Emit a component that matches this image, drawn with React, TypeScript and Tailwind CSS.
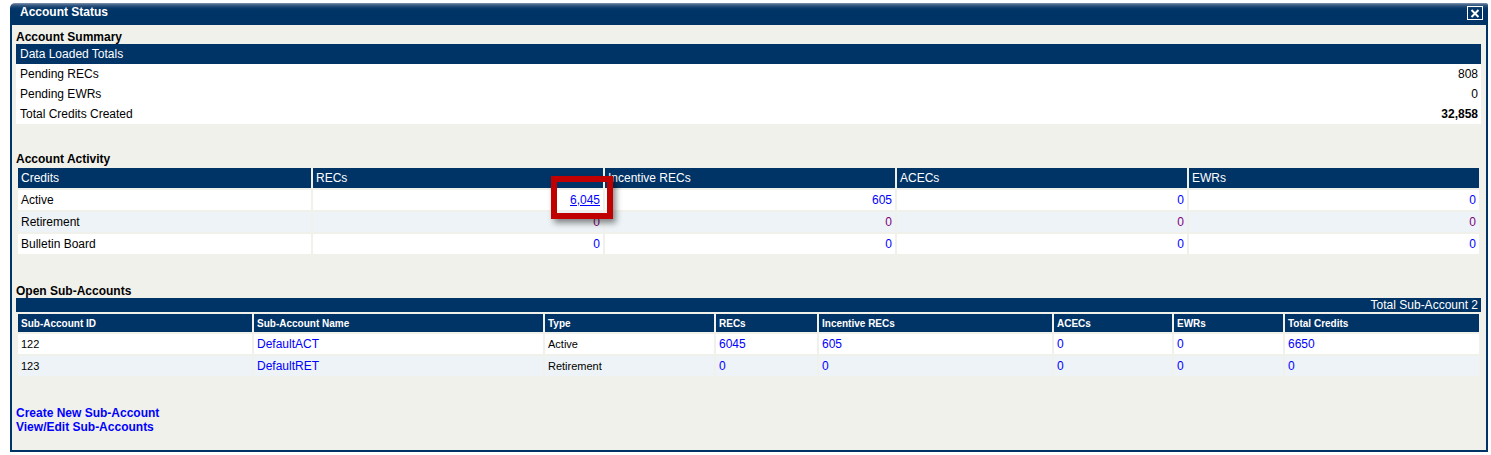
import React from "react";

const BLUE = "text-[#0000ff]";
const PURPLE = "text-[#800080]";

function CloseBox() {
  return (
    <div className="mt-[3px] flex h-[14px] w-[16px] items-center justify-center border border-white">
      <svg width="10" height="9" viewBox="0 0 10 9">
        <path d="M1.5 1 L8.5 8 M8.5 1 L1.5 8" stroke="white" strokeWidth="2" fill="none" />
      </svg>
    </div>
  );
}

const activityRows = [
  { label: "Active", bg: "bg-white", vals: ["6,045", "605", "0", "0"], color: BLUE, underline: true },
  { label: "Retirement", bg: "bg-[#edf3f6]", vals: ["0", "0", "0", "0"], color: PURPLE, underline: false },
  { label: "Bulletin Board", bg: "bg-white", vals: ["0", "0", "0", "0"], color: BLUE, underline: false },
];

const subRows = [
  { id: "122", name: "DefaultACT", type: "Active", vals: ["6045", "605", "0", "0", "6650"], bg: "bg-white" },
  { id: "123", name: "DefaultRET", type: "Retirement", vals: ["0", "0", "0", "0", "0"], bg: "bg-[#edf3f6]" },
];

export default function App() {
  return (
    <div className="relative min-h-[455px] bg-white font-['Liberation_Sans',Arial,sans-serif] text-[12px] text-black">
      <div className="pl-[10px] pt-[3px]">
        <div className="flex h-[449px] w-[1478px] flex-col">
          {/* Title bar */}
          <div className="flex h-[22px] items-start justify-between rounded-tl-[5px] rounded-tr-[2px] bg-[linear-gradient(to_bottom,#8196ae_0px,#3a5c84_2px,#0a3b6b_5px,#003366_8px)] pl-[10px] pr-[5px]">
            <div className="pt-[2px] text-[12px] font-bold leading-[15px] text-white">Account Status</div>
            <CloseBox />
          </div>

          {/* Body */}
          <div className="flex-1 border-x-2 border-b-2 border-[#003366] bg-[#f1f1ec] pl-[4px] pr-[5px] pt-[4px]">
            {/* Account Summary */}
            <div className="h-[15px] font-bold leading-[17px]">Account Summary</div>
            <div className="h-[20px] bg-[#003366] pl-[4px] leading-[20px] text-white">Data Loaded Totals</div>
            <div className="bg-white">
              <div className="flex h-[20px] items-center justify-between pl-[4px] pr-[3px]">
                <span>Pending RECs</span>
                <span>808</span>
              </div>
              <div className="flex h-[20px] items-center justify-between pl-[4px] pr-[3px]">
                <span>Pending EWRs</span>
                <span>0</span>
              </div>
              <div className="flex h-[20px] items-center justify-between pl-[4px] pr-[3px]">
                <span>Total Credits Created</span>
                <span className="font-bold">32,858</span>
              </div>
            </div>

            {/* Account Activity */}
            <div className="mt-[27px] h-[15px] font-bold leading-[16px]">Account Activity</div>
            <table className="w-[1465px] table-fixed border-separate border-spacing-[2px]">
              <colgroup>
                <col className="w-[293px]" />
                <col className="w-[290px]" />
                <col className="w-[290px]" />
                <col className="w-[290px]" />
                <col className="w-[290px]" />
              </colgroup>
              <thead>
                <tr>
                  {["Credits", "RECs", "Incentive RECs", "ACECs", "EWRs"].map((h) => (
                    <th key={h} className="h-[20px] bg-[#003366] p-0 pl-[3px] text-left align-middle text-[12px] font-normal leading-[20px] text-white">
                      {h}
                    </th>
                  ))}
                </tr>
              </thead>
              <tbody>
                {activityRows.map((r) => (
                  <tr key={r.label}>
                    <td className={`h-[20px] p-0 pl-[3px] align-middle leading-[20px] ${r.bg}`}>{r.label}</td>
                    {r.vals.map((v, i) => (
                      <td key={i} className={`h-[20px] p-0 pr-[3px] text-right align-middle leading-[20px] ${r.bg}`}>
                        <span className={`${r.color} ${r.underline && i === 0 ? "underline" : ""}`}>{v}</span>
                      </td>
                    ))}
                  </tr>
                ))}
              </tbody>
            </table>

            {/* Open Sub-Accounts */}
            <div className="mt-[27px] h-[15px] font-bold leading-[17px]">Open Sub-Accounts</div>
            <div className="h-[14px] bg-[#003366] pr-[3px] text-right leading-[14px] text-white">Total Sub-Account 2</div>
            <table className="w-[1465px] table-fixed border-separate border-spacing-[2px]">
              <colgroup>
                <col className="w-[234px]" />
                <col className="w-[289px]" />
                <col className="w-[169px]" />
                <col className="w-[101px]" />
                <col className="w-[233px]" />
                <col className="w-[118px]" />
                <col className="w-[109px]" />
                <col className="w-[194px]" />
              </colgroup>
              <thead>
                <tr>
                  {["Sub-Account ID", "Sub-Account Name", "Type", "RECs", "Incentive RECs", "ACECs", "EWRs", "Total Credits"].map((h) => (
                    <th key={h} className="h-[18px] bg-[#003366] p-0 pl-[3px] pt-[1px] text-left align-middle text-[10px] font-bold leading-[17px] text-white">
                      {h}
                    </th>
                  ))}
                </tr>
              </thead>
              <tbody>
                {subRows.map((r) => (
                  <tr key={r.id}>
                    <td className={`h-[20px] p-0 pl-[3px] align-middle text-[11px] leading-[20px] ${r.bg}`}>{r.id}</td>
                    <td className={`h-[20px] p-0 pl-[3px] align-middle leading-[20px] ${r.bg}`}>
                      <span className={BLUE}>{r.name}</span>
                    </td>
                    <td className={`h-[20px] p-0 pl-[3px] align-middle text-[11px] leading-[20px] ${r.bg}`}>{r.type}</td>
                    {r.vals.map((v, i) => (
                      <td key={i} className={`h-[20px] p-0 pl-[3px] align-middle leading-[20px] ${r.bg}`}>
                        <span className={BLUE}>{v}</span>
                      </td>
                    ))}
                  </tr>
                ))}
              </tbody>
            </table>

            {/* Links */}
            <div className="mt-[28px] flex flex-col font-bold leading-[14px] text-[#0000ff]">
              <span>Create New Sub-Account</span>
              <span>View/Edit Sub-Accounts</span>
            </div>
          </div>
        </div>
      </div>

      {/* Annotation highlight */}
      <div className="absolute left-[551px] top-[176px] h-[43px] w-[62px] border-[6px] border-[#c00000] shadow-[3px_4px_6px_rgba(0,0,0,0.45)]" />
    </div>
  );
}
